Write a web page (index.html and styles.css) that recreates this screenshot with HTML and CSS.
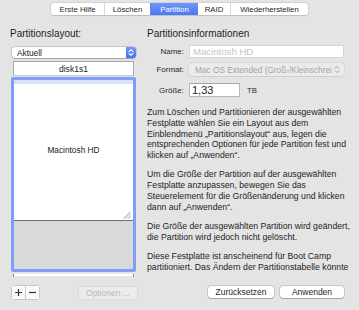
FILE: index.html
```html
<!DOCTYPE html>
<html lang="de">
<head>
<meta charset="utf-8">
<link rel="stylesheet" href="styles.css">
</head>
<body>
<div class="window">
  <nav class="tabs">
    <span class="tab w1">Erste Hilfe</span>
    <span class="tab w2">Löschen</span>
    <span class="tab w3 active">Partition</span>
    <span class="tab w4">RAID</span>
    <span class="tab w5">Wiederherstellen</span>
  </nav>
  <div class="main">
    <section class="left">
      <h2 class="heading">Partitionslayout:</h2>
      <div class="popup">
        <span class="popup-text">Aktuell</span>
        <span class="stepper"><svg width="10" height="11" viewBox="0 0 10 11"><path d="M3 4.6 L5 2.6 L7 4.6 M3 6.4 L5 8.4 L7 6.4" fill="none" stroke="#fff" stroke-width="1.1" stroke-linecap="round" stroke-linejoin="round"/></svg></span>
      </div>
      <div class="disk">disk1s1</div>
      <div class="pie">
        <div class="part">
          <div class="part-strip"></div>
          <div class="part-name">Macintosh HD</div>
          <svg class="grip" width="8" height="8" viewBox="0 0 8 8"><path d="M7.5 0.5 L0.5 7.5 M7.5 3 L3 7.5 M7.5 5.5 L5.5 7.5" stroke="#8a8a8a" stroke-width="0.8"/></svg>
        </div>
        <div class="free"></div>
      </div>
      <div class="ruler"></div>
      <div class="left-buttons">
        <div class="pm">
          <span class="pm-btn"><svg width="13" height="13" viewBox="0 0 13 13"><path d="M3 6.5 H10 M6.5 3 V10" stroke="#333" stroke-width="1.2"/></svg></span>
          <span class="pm-btn"><svg width="13" height="13" viewBox="0 0 13 13"><path d="M3 6.5 H10" stroke="#333" stroke-width="1.2"/></svg></span>
        </div>
        <span class="btn disabled opt">Optionen ...</span>
      </div>
    </section>
    <section class="right">
      <h2 class="heading">Partitionsinformationen</h2>
      <div class="form">
        <label class="flabel">Name:</label>
        <div class="field name-field">Macintosh HD</div>
        <label class="flabel">Format:</label>
        <div class="format">
          <span class="format-text">Mac OS Extended (Groß-/Kleinschrei</span>
          <svg width="8" height="11" viewBox="0 0 8 11"><path d="M2 4.4 L4 2.4 L6 4.4 M2 6.6 L4 8.6 L6 6.6" fill="none" stroke="#a4a4a4" stroke-width="1" stroke-linecap="round" stroke-linejoin="round"/></svg>
        </div>
        <label class="flabel size-label">Größe:</label>
        <div class="size-row">
          <div class="field size-field">1,33</div>
          <span class="unit">TB</span>
        </div>
      </div>
      <div class="desc">
        <p>Zum Löschen und Partitionieren der ausgewählten<br>Festplatte wählen Sie ein Layout aus dem<br>Einblendmenü „Partitionslayout“ aus, legen die<br>entsprechenden Optionen für jede Partition fest und<br>klicken auf „Anwenden“.</p>
        <p>Um die Größe der Partition auf der ausgewählten<br>Festplatte anzupassen, bewegen Sie das<br>Steuerelement für die Größenänderung und klicken<br>dann auf „Anwenden“.</p>
        <p>Die Größe der ausgewählten Partition wird geändert,<br>die Partition wird jedoch nicht gelöscht.</p>
        <p>Diese Festplatte ist anscheinend für Boot Camp<br>partitioniert. Das Ändern der Partitionstabelle könnte</p>
      </div>
      <div class="actions">
        <span class="btn reset">Zurücksetzen</span>
        <span class="btn apply">Anwenden</span>
      </div>
    </section>
  </div>
</div>
</body>
</html>
```
FILE: styles.css
```css
* { box-sizing: border-box; }

html, body {
  margin: 0;
  padding: 0;
}

body {
  width: 359px;
  height: 310px;
  overflow: hidden;
  background: #e4e4e4;
  font-family: "Liberation Sans", Arial, sans-serif;
  color: #222;
}

.window {
  width: 359px;
  height: 310px;
  padding-top: 3px;
}

/* segmented tabs */
.tabs {
  display: flex;
  margin-left: 51px;
  width: 257px;
  height: 12px;
  background: #fff;
  border-radius: 3px;
  overflow: hidden;
  box-shadow: 0 0 0 0.5px #c2c2c2, 0 0.5px 1px rgba(0,0,0,0.18);
  font-size: 7.8px;
  color: #1e1e1e;
}

.tab {
  display: flex;
  align-items: center;
  justify-content: center;
  border-left: 1px solid #d8d8d8;
}

.tab.w1 { width: 53px; border-left: none; }
.tab.w2 { width: 46px; }
.tab.w3 { width: 48px; }
.tab.w4 { width: 32px; }
.tab.w5 { width: 78px; }

.tab.active {
  background: linear-gradient(#6f97fb, #4b78f4);
  color: #fff;
  border-left-color: #5a83f6;
}

.tab.active + .tab { border-left: none; }

.main {
  display: flex;
  padding-top: 13px;
}

.heading {
  margin: 0;
  font-size: 10px;
  line-height: 12px;
  font-weight: normal;
  color: #1e1e1e;
}

/* left column */
.left {
  margin-left: 10px;
  width: 127px;
  display: flex;
  flex-direction: column;
}

.popup {
  margin: 7px 0 0 2px;
  width: 124px;
  height: 11px;
  background: #fff;
  border-radius: 3px;
  box-shadow: 0 0 0 0.5px rgba(0,0,0,0.22), 0 0.5px 1px rgba(0,0,0,0.18);
  display: flex;
  align-items: center;
  justify-content: space-between;
  font-size: 8.3px;
}

.popup-text { padding-left: 5px; }

.stepper {
  width: 10px;
  height: 11px;
  border-radius: 0 3px 3px 0;
  background: linear-gradient(#7099fb, #4472f3);
  display: flex;
}

.disk {
  margin: 3px 0 0 3px;
  width: 121px;
  height: 15px;
  background: #fff;
  border: 1px solid #a9a9a9;
  border-bottom-color: #c8c8c8;
  font-size: 8.6px;
  display: flex;
  align-items: center;
  justify-content: center;
}

.pie {
  margin: 1px 0 0 1px;
  width: 125px;
  height: 195px;
  border: 3px solid #7e9ef7;
  border-radius: 2px;
  display: flex;
  flex-direction: column;
  background: #d9d9d9;
}

.part {
  position: relative;
  height: 141px;
  background: #fff;
  border-bottom: 1px solid #6e6e6e;
  display: flex;
  flex-direction: column;
}

.part-strip {
  height: 4px;
  background: #dae2fb;
}

.part-name {
  flex: 1;
  display: flex;
  align-items: center;
  justify-content: center;
  font-size: 8.3px;
  padding-bottom: 4px;
}

.grip {
  position: absolute;
  right: 2px;
  bottom: 1px;
}

.free { flex: 1; }

.ruler {
  margin: 2px 0 0 3px;
  width: 121px;
  height: 3px;
  border-left: 1px solid #8d8d8d;
  border-right: 1px solid #8d8d8d;
  background: linear-gradient(#fff 0 2px, transparent 2px);
}

.left-buttons {
  margin: 9px 0 0 2px;
  display: flex;
  justify-content: space-between;
  align-items: center;
}

.pm {
  display: flex;
  gap: 1px;
  box-shadow: 0 0 0 0.5px rgba(0,0,0,0.25);
  border-radius: 2px;
  background: #c9c9c9;
}

.pm-btn {
  width: 13px;
  height: 13px;
  background: #fafafa;
  display: flex;
}

.btn {
  height: 12px;
  background: #fff;
  border-radius: 3px;
  box-shadow: 0 0 0 0.5px rgba(0,0,0,0.22), 0 0.5px 1px rgba(0,0,0,0.18);
  display: flex;
  align-items: center;
  justify-content: center;
  font-size: 8.5px;
  color: #1e1e1e;
}

.btn.disabled {
  background: #ececec;
  color: #b8b8b8;
  box-shadow: 0 0 0 0.5px rgba(0,0,0,0.08);
}

.opt { width: 58px; }

/* right column */
.right {
  margin-left: 10px;
  width: 197px;
  display: flex;
  flex-direction: column;
}

.form {
  margin-top: 5px;
  display: grid;
  grid-template-columns: 37px 155px;
  column-gap: 5px;
  row-gap: 5px;
  align-items: center;
}

.flabel {
  text-align: right;
  font-size: 8px;
  color: #2a2a2a;
}

.size-label { margin-top: 2px; }

.field {
  background: #fff;
  border: 1px solid #cfcfcf;
  display: flex;
  align-items: center;
}

.name-field {
  height: 13px;
  padding-left: 3px;
  font-size: 9.6px;
  color: #c4c4c4;
  border-color: #d6d6d6;
}

.format {
  height: 13px;
  border-radius: 3px;
  background: #ebebeb;
  box-shadow: 0 0 0 0.5px rgba(0,0,0,0.1), 0 0.5px 0.5px rgba(0,0,0,0.08);
  display: flex;
  align-items: center;
  justify-content: space-between;
  padding: 0 3px 0 6px;
  font-size: 8.3px;
  color: #a3a3a3;
}

.format-text { white-space: nowrap; overflow: hidden; }

.size-row {
  margin-top: 2px;
  display: flex;
  align-items: center;
  gap: 7px;
}

.size-field {
  width: 51px;
  height: 14px;
  padding-left: 2px;
  font-size: 11px;
  color: #1e1e1e;
  border-color: #b9b9b9;
  border-top-color: #a5a5a5;
}

.unit { font-size: 7.8px; color: #2a2a2a; }

.desc {
  margin-top: 10px;
  width: 210px;
  height: 166px;
  font-size: 8.7px;
  line-height: 10.8px;
  color: #1e1e1e;
  white-space: nowrap;
}

.desc p { margin: 0 0 8.4px; }

.actions {
  margin-top: 13px;
  display: flex;
  justify-content: flex-end;
  gap: 6px;
}

.reset { width: 66px; }
.apply { width: 64px; }
```
